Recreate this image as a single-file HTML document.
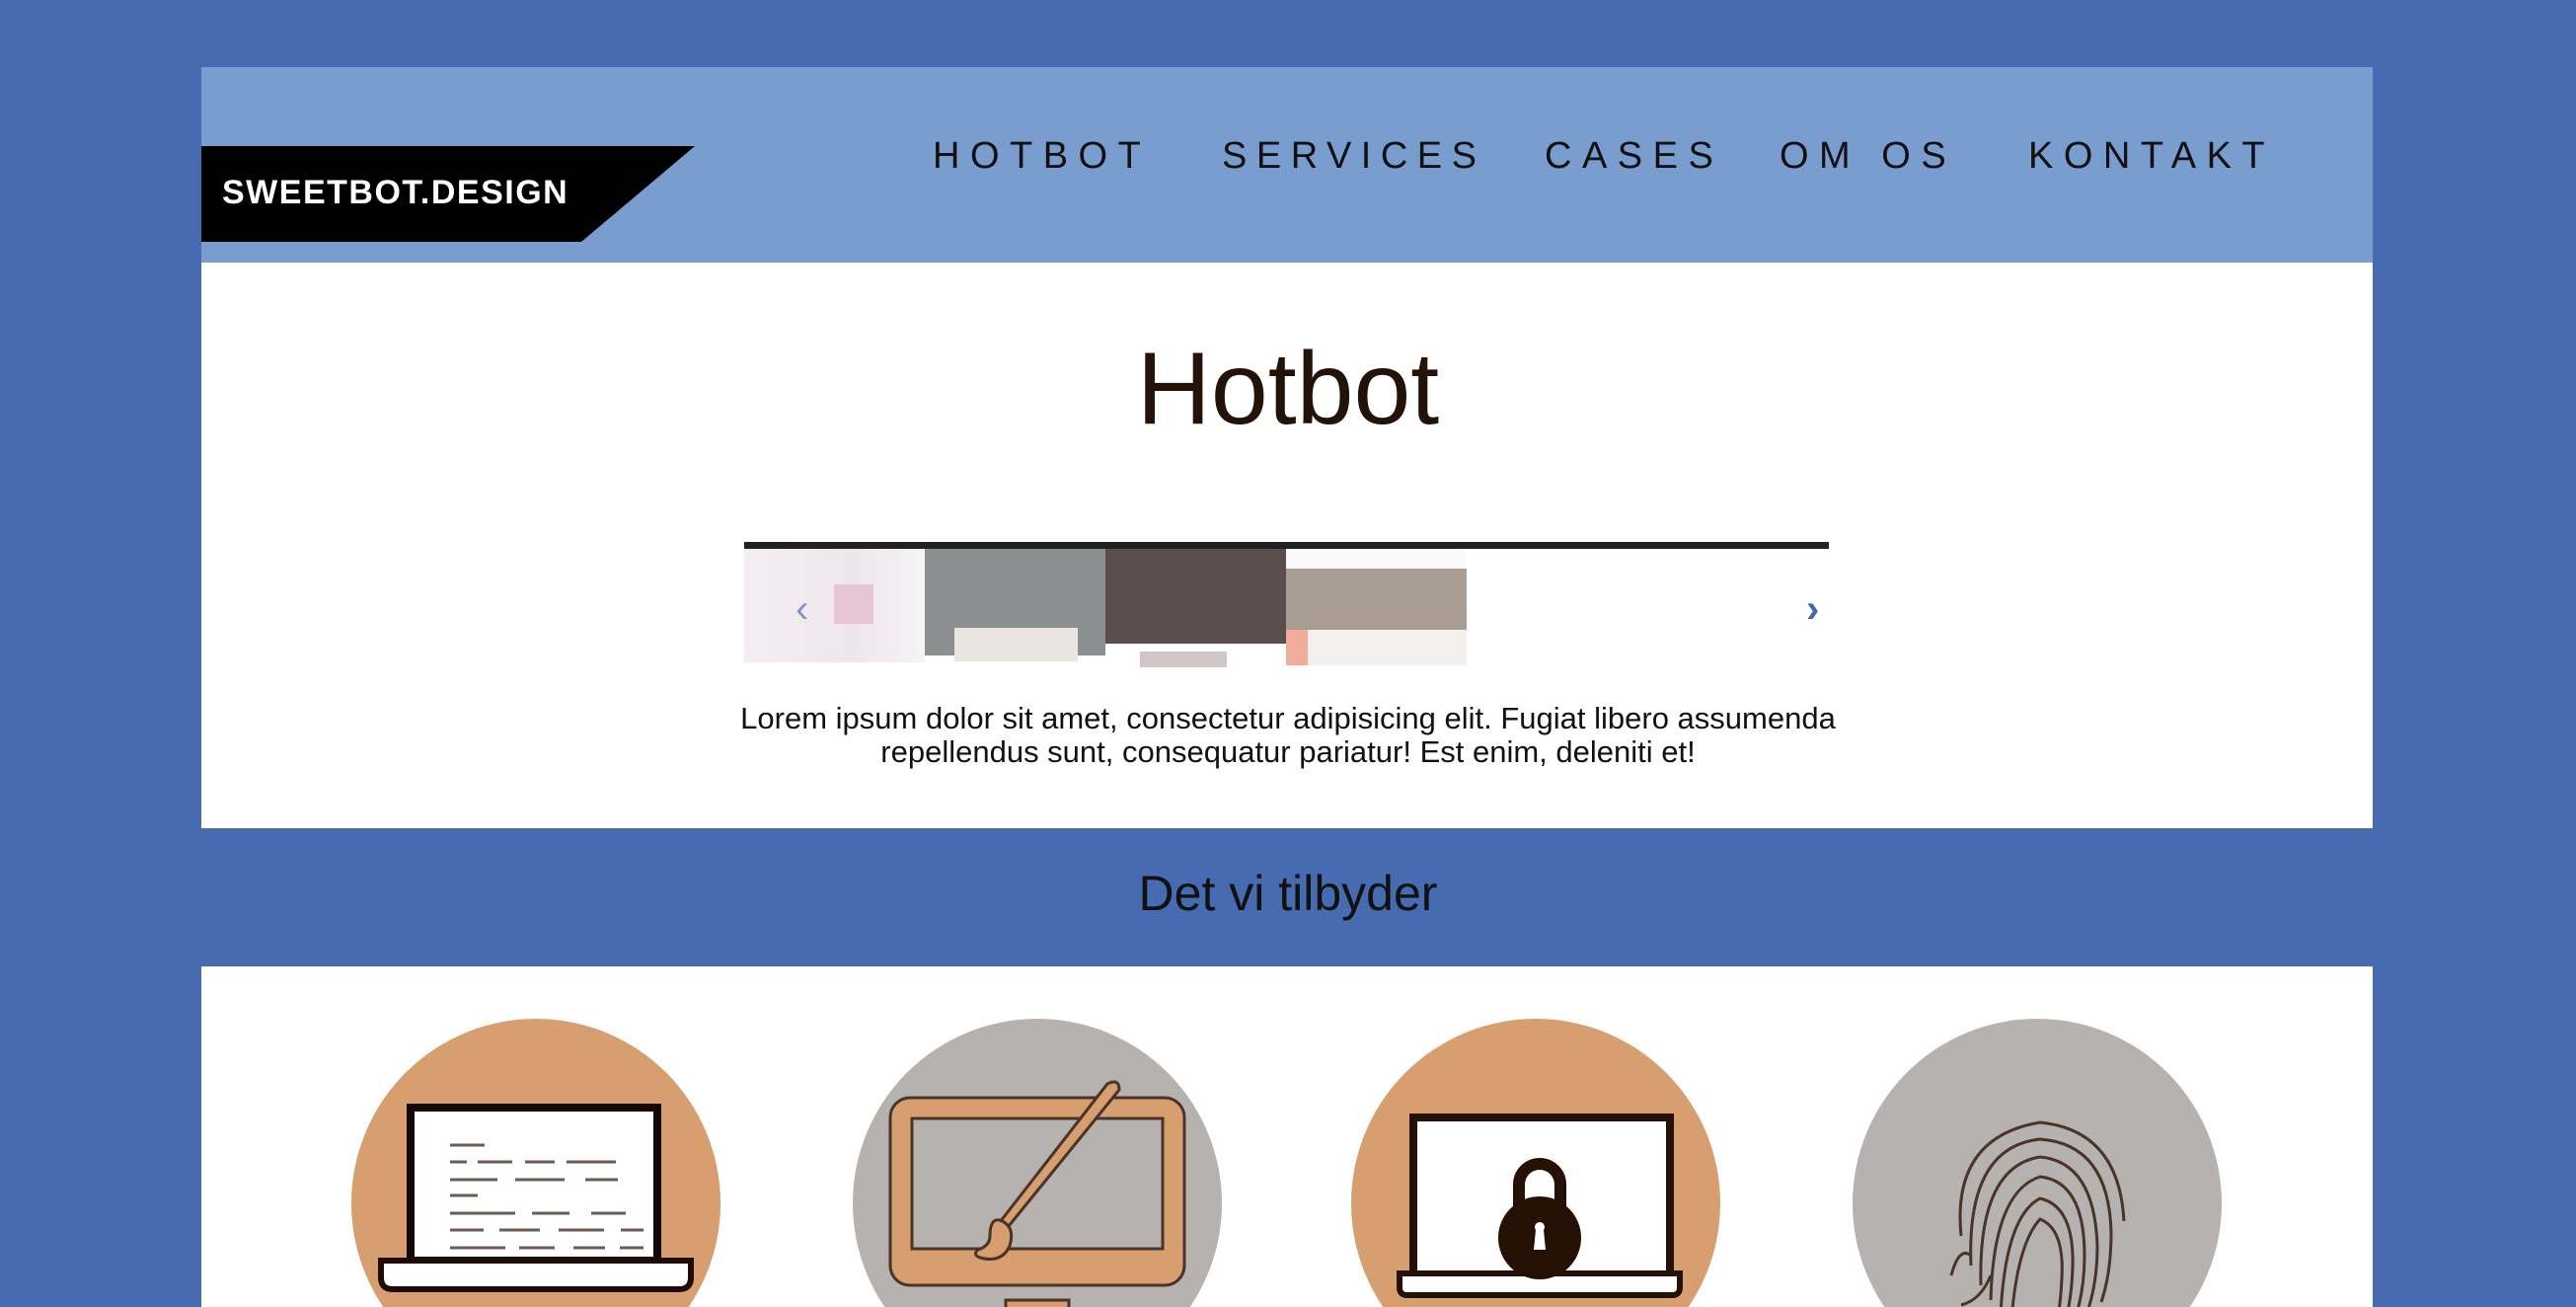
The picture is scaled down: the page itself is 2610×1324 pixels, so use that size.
<!DOCTYPE html>
<html><head><meta charset="utf-8"><style>
*{margin:0;padding:0;box-sizing:border-box}
html,body{width:2610px;height:1324px;overflow:hidden}
body{background:#466bb0;font-family:"Liberation Sans",sans-serif;position:relative}
#wrap{position:absolute;left:0;top:0;width:2610px;height:1324px;overflow:hidden}
.abs{position:absolute}
#hdr{left:204px;top:68px;width:2200px;height:198px;background:#7a9dd0}
#logo{left:204px;top:148px;width:500px;height:97px;background:#000;clip-path:polygon(0 0,100% 0,77% 100%,0 100%)}
#logotxt{left:225px;top:176px;color:#fff;font-weight:bold;font-size:34px;letter-spacing:1.5px}
.nav{top:137px;font-size:38px;letter-spacing:10.5px;color:#111;white-space:nowrap}
#main{left:204px;top:266px;width:2200px;height:573px;background:#fff}
h1{position:absolute;left:0;width:2610px;text-align:center;top:335px;font-weight:normal;font-size:104px;color:#231208}
#bar{left:754px;top:549px;width:1099px;height:7px;background:#222}
.sl{top:556px;width:183px;height:118px}
#para{left:680px;width:1250px;top:711px;text-align:center;font-size:31px;line-height:34px;color:#111}
#band{left:0;top:876px;width:2610px;text-align:center;font-size:50px;color:#111}
#bot{left:204px;top:979px;width:2200px;height:345px;background:#fff}
.c{top:1032px;width:374px;height:292px}
</style></head><body><div id="wrap">
<div id="hdr" class="abs"></div>
<div id="logo" class="abs"></div>
<div id="logotxt" class="abs">SWEETBOT.DESIGN</div>
<div class="abs nav" style="left:945px">HOTBOT</div>
<div class="abs nav" style="left:1238px;letter-spacing:9.5px">SERVICES</div>
<div class="abs nav" style="left:1565px">CASES</div>
<div class="abs nav" style="left:1803px">OM OS</div>
<div class="abs nav" style="left:2055px">KONTAKT</div>
<div id="main" class="abs"></div>
<h1>Hotbot</h1>
<div id="bar" class="abs"></div>
<div class="abs sl" style="left:754px;background:linear-gradient(90deg,#f4eef2,#efe6ec 60%,#f6f3f5);height:115px"></div>
<div class="abs" style="left:845px;top:592px;width:40px;height:40px;background:#e6c6d6"></div>
<div class="abs" style="left:937px;top:556px;width:183px;height:108px;background:#8a8f8f"></div>
<div class="abs" style="left:967px;top:636px;width:125px;height:34px;background:#e9e6e2"></div>
<div class="abs" style="left:1120px;top:556px;width:183px;height:96px;background:#5a4f4c"></div>
<div class="abs" style="left:1155px;top:660px;width:88px;height:16px;background:#cfc7c4"></div>
<div class="abs" style="left:1303px;top:556px;width:183px;height:20px;background:#fafafa"></div>
<div class="abs" style="left:1303px;top:576px;width:183px;height:62px;background:#a89c93"></div>
<div class="abs" style="left:1303px;top:638px;width:22px;height:36px;background:#f1ac9c"></div>
<div class="abs" style="left:1325px;top:638px;width:161px;height:36px;background:#f3f1ef"></div>
<div class="abs" style="left:806px;top:595px;font-size:40px;color:#7d98cc">‹</div>
<div class="abs" style="left:1830px;top:595px;font-size:40px;color:#4169b0;font-weight:bold">›</div>
<div id="para" class="abs">Lorem ipsum dolor sit amet, consectetur adipisicing elit. Fugiat libero assumenda<br>repellendus sunt, consequatur pariatur! Est enim, deleniti et!</div>
<div id="band" class="abs">Det vi tilbyder</div>
<div id="bot" class="abs"></div>
<svg class="abs c" style="left:356px" viewBox="0 0 374 292"><circle cx="187" cy="187" r="187" fill="#d79e6f"/>
<rect x="60" y="90" width="250" height="155" fill="#fff" stroke="#140806" stroke-width="8"/>
<path d="M30 245H344V262Q344 274 332 274H42Q30 274 30 262Z" fill="#fff" stroke="#1e0b04" stroke-width="6"/>
<g stroke="#6b5a55" stroke-width="3">
<path d="M100 128h35M100 145h17M128 145h35M176 145h30M218 145h50M100 163h48M166 163h50M237 163h33M100 179h28M100 197h66M183 197h38M243 197h35M100 214h34M150 214h41M210 214h46M273 214h23M100 232h56M170 232h36M225 232h32M272 232h24"/></g></svg>
<svg class="abs c" style="left:864px" viewBox="0 0 374 292"><circle cx="187" cy="187" r="187" fill="#b5b2af"/>
<rect x="38" y="80" width="298" height="190" rx="20" fill="#d79e6f" stroke="#4a3328" stroke-width="3"/>
<rect x="60" y="101" width="254" height="132" fill="#b5b2af" stroke="#4a3328" stroke-width="3"/>
<rect x="155" y="285" width="64" height="100" fill="#d79e6f" stroke="#4a3328" stroke-width="3"/>
<path d="M258 66q12-6 12 6L158 210l-9-4Z" fill="#d79e6f" stroke="#4a3328" stroke-width="3"/>
<path d="M149 204q16 6 10 26q-8 18-30 12q-8-3-2-8q12-4 12-14q0-18 10-16Z" fill="#d79e6f" stroke="#4a3328" stroke-width="3"/></svg>
<svg class="abs c" style="left:1369px" viewBox="0 0 374 292"><circle cx="187" cy="187" r="187" fill="#d79e6f"/>
<rect x="63" y="100" width="260" height="160" fill="#fff" stroke="#241004" stroke-width="8"/>
<path d="M49 258H333V272Q333 280 325 280H57Q49 280 49 272Z" fill="#fff" stroke="#241004" stroke-width="6"/>
<path d="M170 190v-22a21 21 0 0 1 42 0v22" fill="none" stroke="#241004" stroke-width="12"/>
<circle cx="191" cy="222" r="42" fill="#241004"/>
<path d="M187 214a5 5 0 1 1 8 0l2 20h-12Z" fill="#fff"/></svg>
<svg class="abs c" style="left:1877px" viewBox="0 0 374 292"><circle cx="187" cy="187" r="187" fill="#b5b2af"/>
<g fill="none" stroke="#4a3328" stroke-width="3">
<path d="M110 220q-10-100 80-115q80 8 85 100"/>
<path d="M120 250q-5-120 70-128q70 5 72 95q0 40-10 70"/>
<path d="M130 270q-3-120 60-130q55 5 58 90q0 45-15 80"/>
<path d="M140 285q3-110 50-125q45 5 45 80q0 50-20 90"/>
<path d="M150 300q5-100 40-118q35 8 33 70q-2 60-25 100"/>
<path d="M160 320q5-90 30-117q25 10 22 60q-3 70-30 110"/>
<path d="M100 260q8-30 20-20M110 290q20-5 30-30"/></g></svg>
</div></body></html>
